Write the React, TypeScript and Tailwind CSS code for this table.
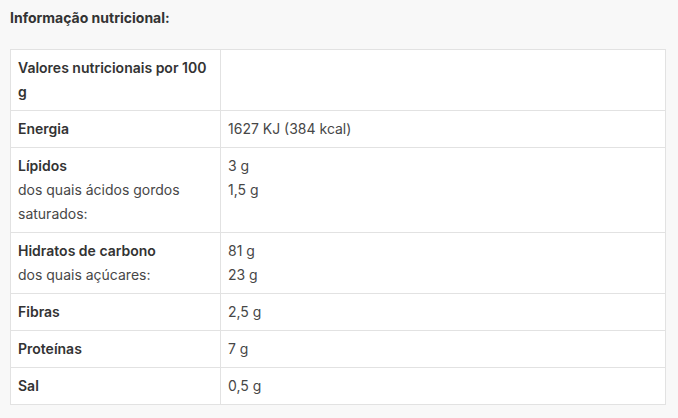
import React from 'react'

type Row = {
  label: string[]
  value: string[]
}

const rows: Row[] = [
  { label: ['Valores nutricionais por 100 g'], value: [] },
  { label: ['Energia'], value: ['1627 KJ (384 kcal)'] },
  { label: ['Lípidos', 'dos quais ácidos gordos saturados:'], value: ['3 g', '1,5 g'] },
  { label: ['Hidratos de carbono', 'dos quais açúcares:'], value: ['81 g', '23 g'] },
  { label: ['Fibras'], value: ['2,5 g'] },
  { label: ['Proteínas'], value: ['7 g'] },
  { label: ['Sal'], value: ['0,5 g'] },
]

export default function App() {
  return (
    <div
      className="w-[678px] h-[418px] bg-[#f8f8f8] px-[10px] pt-[6px] text-[#3a3a3a]"
      style={{ fontFamily: 'Inter, "Liberation Sans", sans-serif' }}
    >
      <h2 className="text-[14px] leading-[24px] font-bold text-[#333]">Informação nutricional:</h2>

      <table className="mt-[19px] w-[656px] border-collapse bg-white text-[14px] leading-[24px]">
        <tbody>
          {rows.map((row, i) => (
            <tr key={i}>
              <td className="w-[210px] border border-[#e2e2e2] px-[7px] py-[6px] align-top">
                {row.label.map((line, j) => (
                  <div key={j} className={j === 0 ? 'font-semibold text-[#333]' : 'text-[#474747]'}>
                    {line}
                  </div>
                ))}
              </td>
              <td className="border border-[#e2e2e2] px-[7px] py-[6px] align-top text-[#474747]">
                {row.value.map((line, j) => (
                  <div key={j}>{line}</div>
                ))}
              </td>
            </tr>
          ))}
        </tbody>
      </table>
    </div>
  )
}
